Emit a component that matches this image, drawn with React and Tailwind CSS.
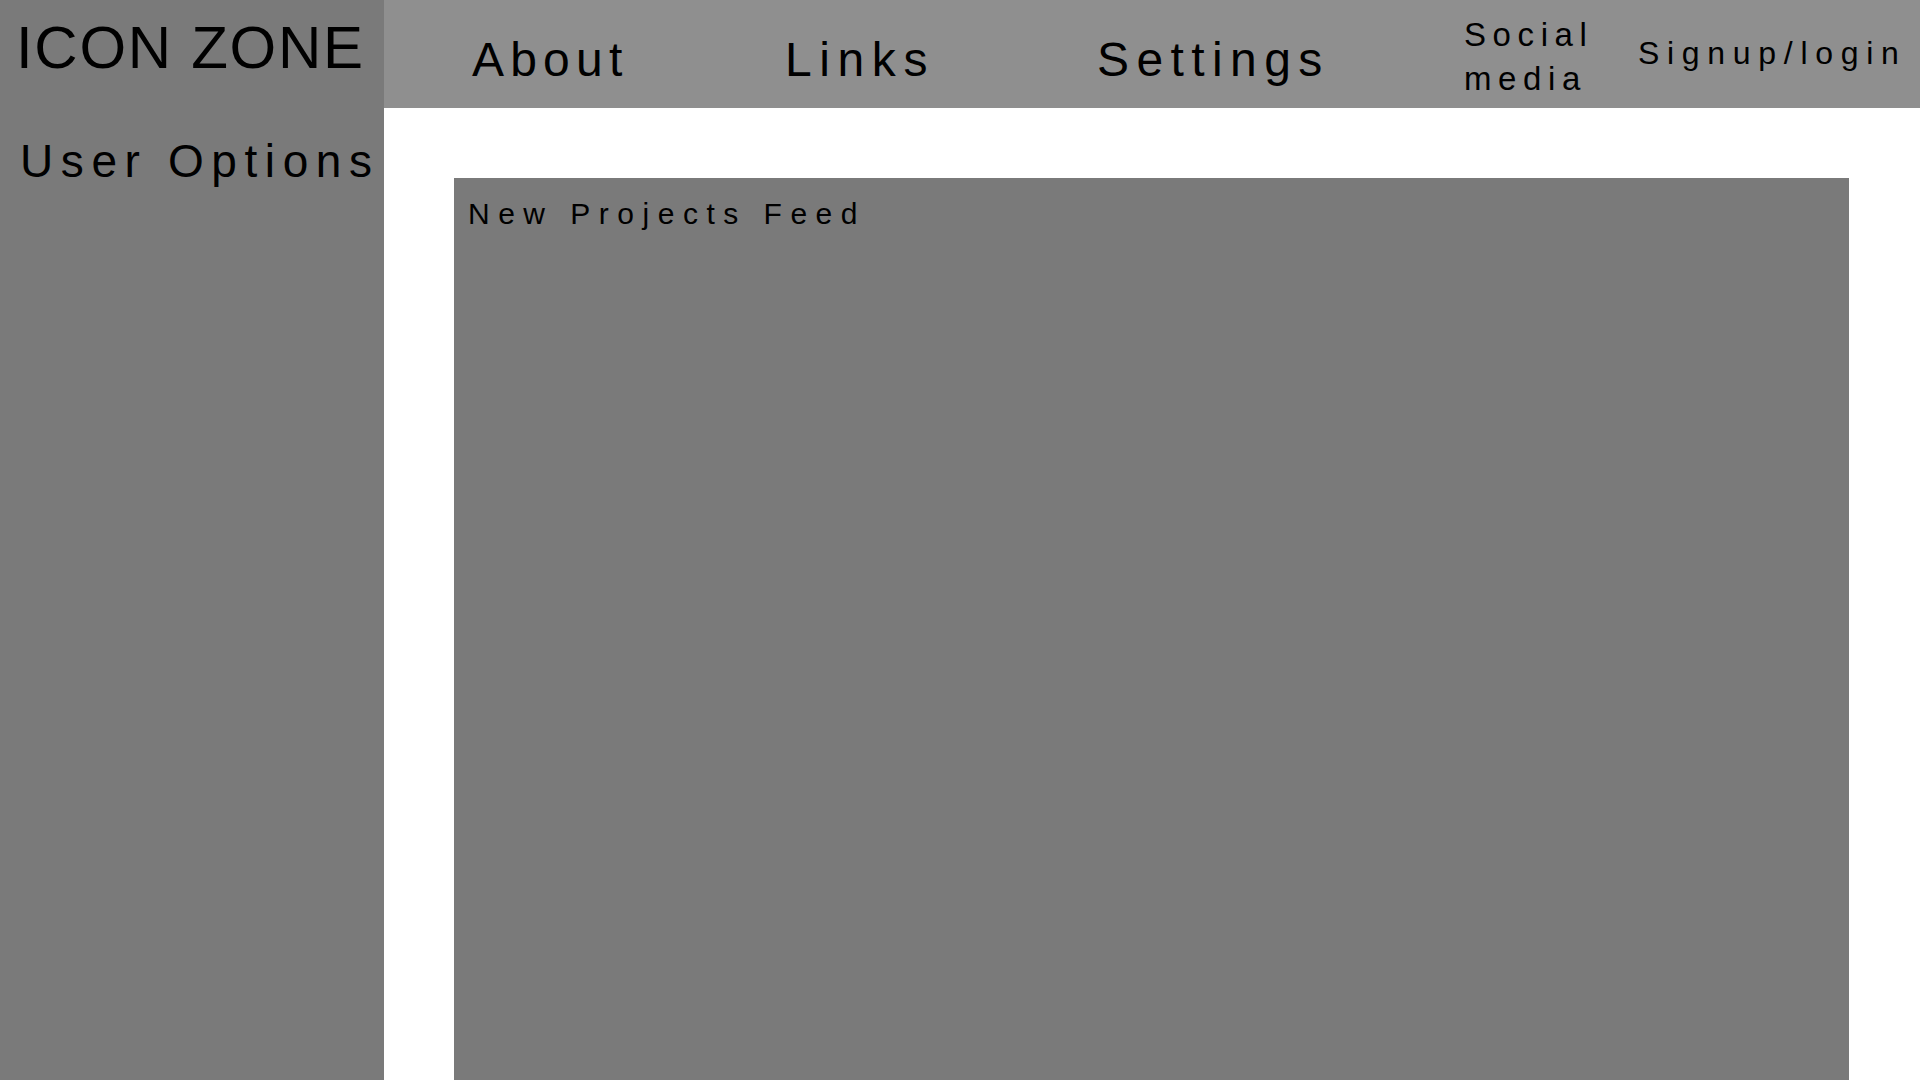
const font = { fontFamily: '"Liberation Sans", Arial, sans-serif' };

const NavItem = ({ label, className }) => (
    <div className={`shrink-0 leading-none text-black whitespace-nowrap ${className}`}>{label}</div>
);

const App = () => {
    return (
        <div className="flex h-screen w-full overflow-hidden bg-white" style={font}>
            {/* sidebar */}
            <aside className="flex w-[384px] shrink-0 flex-col bg-[#7a7a7a]">
                <h1 className="pl-[16px] pt-[18px] text-[60px] leading-none tracking-[1.7px] text-black whitespace-nowrap">ICON ZONE</h1>
                <h2 className="mt-[60px] pl-[20px] text-[46px] leading-none tracking-[7.6px] text-black whitespace-nowrap">User Options</h2>
            </aside>

            <div className="flex min-w-0 flex-1 flex-col">
                {/* top nav */}
                <header className="flex h-[108px] shrink-0 items-start bg-[#8f8f8f] pl-[88px]">
                    <NavItem label="About" className="w-[313px] pt-[36px] text-[48px] tracking-[6.2px]" />
                    <NavItem label="Links" className="w-[312px] pt-[36px] text-[48px] tracking-[7.6px]" />
                    <NavItem label="Settings" className="w-[367px] pt-[36px] text-[48px] tracking-[7.4px]" />
                    <div className="w-[174px] shrink-0 pt-[13px] text-[33px] leading-[44px] tracking-[6.6px] text-black">
                        Social<br />media
                    </div>
                    <NavItem label="Signup/login" className="pt-[37px] text-[32px] tracking-[7.7px]" />
                </header>

                {/* content */}
                <main className="flex flex-1 flex-col pl-[70px] pr-[71px] pt-[70px]">
                    <section className="flex-1 bg-[#7a7a7a] pl-[14px] pt-[21px]">
                        <h3 className="text-[30px] leading-none tracking-[8.5px] text-black whitespace-nowrap">New Projects Feed</h3>
                    </section>
                </main>
            </div>
        </div>
    );
};

export default App;
